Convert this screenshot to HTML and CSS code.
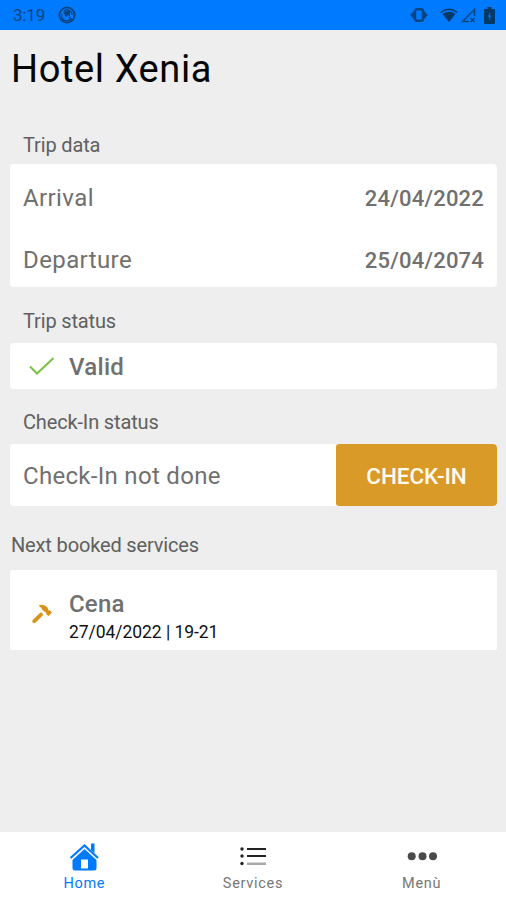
FILE: index.html
```html
<!DOCTYPE html>
<html lang="en">
<head>
<meta charset="utf-8">
<title>Hotel Xenia</title>
<link rel="stylesheet" href="styles.css">
</head>
<body>
<div class="app">
  <header class="statusbar">
    <span class="time">3:19</span>
    <svg class="app-icon" width="18" height="18" viewBox="0 0 18 18"><circle cx="9" cy="9" r="7.6" fill="none" stroke="currentColor" stroke-width="1.800"/><path d="M12.500 13A5 5 0 0 1 4 8M6 5A5 5 0 0 1 14 9" fill="none" stroke="currentColor" stroke-width="1.300"/><path d="M5 6l7-1.500v6l-2-1.500-2 2z" fill="currentColor"/><path d="M11 11l3 3" stroke="currentColor" stroke-width="1.500"/></svg>
    <svg class="vibrate" width="18" height="14" viewBox="0 0 18 14"><path d="M0 7l4-4v8zM18 7l-4-4v8z" fill="currentColor"/><rect x="5" y="1.200" width="8" height="11.600" rx="2" fill="none" stroke="currentColor" stroke-width="2.400"/></svg>
    <svg class="wifi" width="18" height="15" viewBox="0 0 18 15"><path d="M.8 4.500Q9-2 17.200 4.500" fill="none" stroke="currentColor" stroke-width="1.500"/><path d="M2.500 6Q9 1.500 15.500 6L9 14z" fill="currentColor"/></svg>
    <svg class="signal" width="15" height="15" viewBox="0 0 15 15"><path d="M8 13.500H1.500L13.500 1.500V8M9.500 10l4 4M13.500 10l-4 4" fill="none" stroke="currentColor" stroke-width="1.500"/></svg>
    <svg class="battery" width="11" height="17" viewBox="0 0 11 17"><path d="M3.500 0h4v2H10q1 0 1 1v13q0 1-1 1H1q-1 0-1-1V3q0-1 1-1h2.500z" fill="currentColor"/><path d="M6.500 4.500L3.500 10h1.700v4L7.500 8.500H6z" fill="#0868c8"/></svg>
  </header>
  <main class="content">
    <h1>Hotel Xenia</h1>
    <h2 class="label">Trip data</h2>
    <section class="card">
      <div class="row"><span>Arrival</span><strong>24/04/2022</strong></div>
      <div class="row"><span>Departure</span><strong>25/04/2074</strong></div>
    </section>
    <h2 class="label label-status">Trip status</h2>
    <section class="card status">
      <svg class="check" width="26" height="19" viewBox="0 0 26 19"><path d="M1 9.500l7 7L24.500 1" fill="none" stroke="#78c142" stroke-width="2"/></svg>
      <strong>Valid</strong>
    </section>
    <h2 class="label label-checkin">Check-In status</h2>
    <section class="card checkin"><span>Check-In not done</span><button type="button">CHECK-IN</button></section>
    <h2 class="label label-services">Next booked services</h2>
    <section class="card service">
      <svg class="hammer" width="20" height="20" viewBox="0 0 20 20"><path d="M9 10.500L2.300 17.200" stroke="#d99218" stroke-width="3.800" stroke-linecap="round"/><path d="M6.500 1.500Q12-.500 15.500 3.500l1 3 1.300-.5 2 2.700-3.300 3.300-2.300-1.800.2-1.200-4-3Q10 4 6.500 1.500z" fill="#d99218"/></svg>
      <div><strong>Cena</strong><p>27/04/2022 | 19-21</p></div>
    </section>
  </main>
  <nav class="tabs">
    <a class="tab active">
      <svg width="30" height="28" viewBox="0 0 30 28"><path d="M22 .5h3.500V10L22 7z" fill="currentColor"/><path d="M1.500 15L15.500 2.500 29 15" fill="none" stroke="currentColor" stroke-width="2.200"/><path d="M15.500 6l12 11V25q0 2.500-2.500 2.500H6Q3.500 27.500 3.500 25v-8z" fill="currentColor"/><path d="M12 16.500h7v9h-7z" fill="#fff"/></svg>
      <span>Home</span>
    </a>
    <a class="tab">
      <svg width="30" height="28" viewBox="0 0 30 28"><g fill="#222"><circle cx="4" cy="6" r="1.700"/><circle cx="4" cy="13" r="1.700"/><circle cx="4" cy="20.500" r="1.700"/><path d="M9 5h19v2H9zM9 12h19v2H9z"/></g><path d="M9 19.500h19v2.500H9z" fill="#aaa"/></svg>
      <span>Services</span>
    </a>
    <a class="tab">
      <svg width="30" height="28" viewBox="0 0 30 28"><g fill="#4a4a4a"><circle cx="4.700" cy="13.300" r="4"/><circle cx="15.500" cy="13.300" r="4"/><circle cx="26" cy="13.300" r="4"/></g></svg>
      <span>Menù</span>
    </a>
  </nav>
</div>
</body>
</html>
```
FILE: styles.css
```css
* { box-sizing: border-box; }
body { margin: 0; background: #eee; font-family: Roboto, sans-serif; color: #707070; }
.app { height: 900px; display: flex; flex-direction: column; }
.statusbar { height: 30px; flex: none; background: #007aff; color: #08447f; display: flex; align-items: center; padding: 0 11px 0 13px; }
.time { font-size: 17px; letter-spacing: -.2px; width: 45px; }
.vibrate { margin-left: auto; }
.wifi { margin-left: 12px; color: #043866; }
.signal { margin-left: 3px; }
.battery { margin-left: 8px; color: #043866; }
.content { flex: 1; padding: 0 9px 0 10px; }
h1 { margin: 15px 0 0 1px; height: 47px; font-size: 38px; line-height: 48px; font-weight: 400; color: #050505; letter-spacing: .6px; }
.label { margin: 38px 0 0 13px; height: 34px; font-size: 20px; line-height: 30px; font-weight: 400; color: #606060; letter-spacing: -.15px; }
.card { background: #fff; border-radius: 4px; font-size: 24px; overflow: hidden; }
.card strong { font-weight: 500; }
.row { height: 62px; display: flex; align-items: center; justify-content: space-between; padding: 5px 13px 0 13px; letter-spacing: .4px; }
.row + .row { height: 61px; padding-top: 6px; }
.row strong { font-size: 22px; letter-spacing: .2px; padding-top: 2px; }
.label-status { margin-top: 19px; height: 37px; }
.status { height: 46px; display: flex; align-items: center; gap: 14px; padding-left: 19px; }
.status strong { padding-top: 2px; letter-spacing: .3px; }
.label-checkin { margin-top: 18px; height: 37px; }
.checkin { height: 62px; display: flex; align-items: center; justify-content: space-between; padding-left: 13px; letter-spacing: .3px; }
.checkin span { padding-top: 2px; }
button { align-self: stretch; width: 161px; border: 0; border-radius: 3px; background: #d99a28; color: #fffbf0; font: 500 22.5px Roboto, sans-serif; letter-spacing: -.1px; padding: 2px 0 0; }
.label-services { margin: 24px 0 0 1px; height: 40px; }
.service { height: 80px; display: flex; padding: 20px 0 0 22px; border-radius: 2px; }
.hammer { margin: 14px 17px 0 0; }
.service strong { display: block; line-height: 28px; letter-spacing: .2px; }
.service p { margin: 3px 0 0; font-size: 17.5px; line-height: 22px; letter-spacing: -.05px; color: #111; }
.tabs { flex: none; height: 68px; display: grid; grid-template-columns: repeat(3, 1fr); background: #fff; }
.tab { display: flex; flex-direction: column; align-items: center; padding-top: 11px; font-size: 14.5px; line-height: 22px; letter-spacing: .7px; color: #777; }
.active { color: #007aff; }
.tab span { margin-top: 2px; }
```
